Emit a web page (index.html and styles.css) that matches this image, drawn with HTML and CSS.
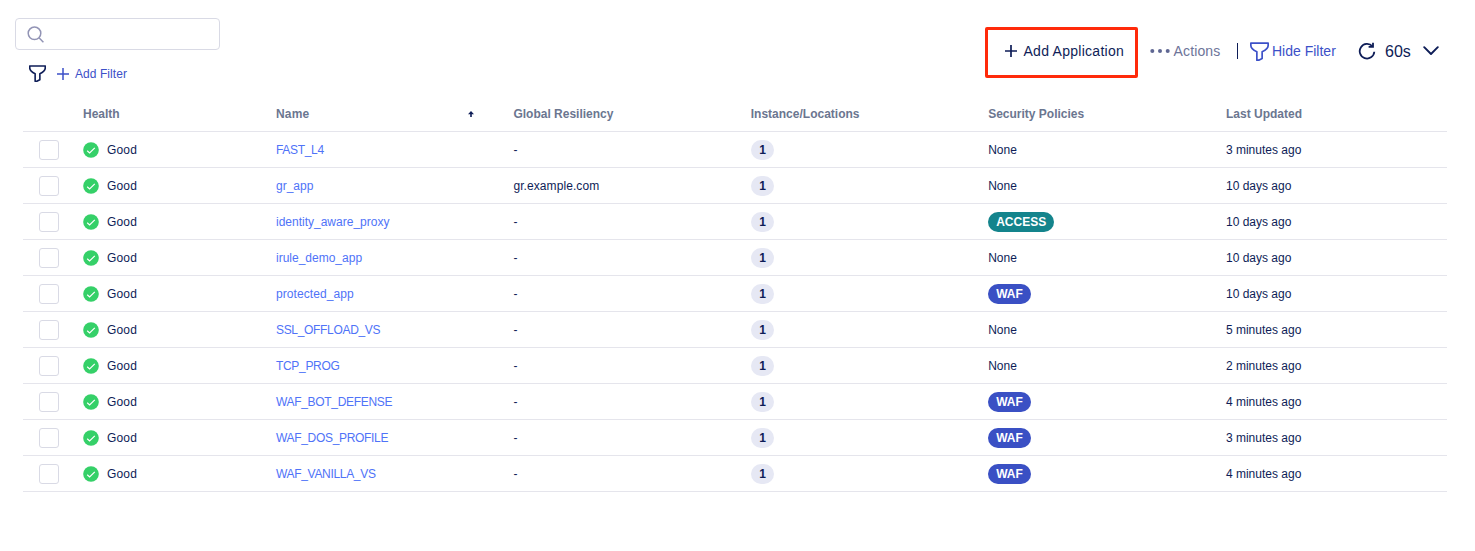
FILE: index.html
```html
<!DOCTYPE html>
<html lang="en">
<head>
<meta charset="utf-8">
<title>Applications</title>
<link rel="stylesheet" href="styles.css">
</head>
<body>
<svg class="defs" width="0" height="0">
  <symbol id="funnel" viewBox="0 0 18 18"><path d="M0.800 1H17.200V3.300C17.200 6.200 15 7.600 11.500 9.200V15.600L8.300 17.200H6.500V9.200C3 7.600 0.800 6.200 0.800 3.300Z" fill="none" stroke="currentColor" stroke-linejoin="round"/></symbol>
  <symbol id="plus" viewBox="0 0 12 12"><path d="M6 0V12M0 6H12" fill="none" stroke="currentColor"/></symbol>
  <symbol id="good" viewBox="0 0 16 16"><circle cx="8" cy="8" r="7.800" fill="#35d068"/><path d="M4.200 8.800L6.600 11L11.800 5.900" fill="none" stroke="#fff" stroke-width="1.200"/></symbol>
</svg>
<header class="toolbar">
  <div class="filters">
    <div class="search"><svg width="18" height="18" viewBox="0 0 18 18" fill="none" stroke="#9294b5" stroke-width="1.500"><circle cx="7.500" cy="7.300" r="6.300"/><path d="M12 11.800L16.400 16.200"/></svg></div>
    <div class="filter-row">
      <svg class="funnel-dark" width="17" height="17"><use href="#funnel"/></svg>
      <svg class="plus-small" width="12" height="12"><use href="#plus"/></svg>
      <span class="add-filter">Add Filter</span>
    </div>
  </div>
  <div class="actions">
    <div class="add-app"><svg width="12" height="12"><use href="#plus"/></svg><span>Add Application</span></div>
    <svg class="dots" width="20" height="6" viewBox="0 0 20 6" fill="#5f6793"><circle cx="2.300" cy="3" r="2"/><circle cx="10" cy="3" r="2"/><circle cx="17.700" cy="3" r="2"/></svg>
    <span class="more">Actions</span>
    <i class="divider"></i>
    <svg class="funnel-blue" width="19" height="19"><use href="#funnel"/></svg>
    <span class="hide">Hide Filter</span>
    <svg class="refresh" width="18" height="18" viewBox="0 0 18 18" fill="none" stroke="#0e1d57" stroke-width="1.800"><path d="M14.500 4.400A7.300 7.300 0 1 0 16.300 9.800"/><path d="M15 0.800V4.800H10.600"/></svg>
    <span class="interval">60s</span>
    <svg class="chevron" width="16" height="10" viewBox="0 0 16 10" fill="none" stroke="#0e1d57" stroke-width="1.900" stroke-linecap="round" stroke-linejoin="round"><path d="M1.200 1.200L8 8L14.800 1.200"/></svg>
  </div>
</header>
<table class="apps">
  <colgroup><col class="c-check"><col class="c-health"><col class="c-std"><col class="c-std"><col class="c-std"><col class="c-std"><col></colgroup>
  <thead><tr><th></th><th>Health</th><th><span class="sorted"><span class="name-label">Name</span><svg width="6" height="6" viewBox="0 0 6 6" fill="#0e1d57"><path d="M3 0L6 3.200H3.800V6H2.200V3.200H0Z"/></svg></span></th><th>Global Resiliency</th><th>Instance/Locations</th><th>Security Policies</th><th>Last Updated</th></tr></thead>
  <tbody>
    <tr><td><i class="check"></i></td><td><span class="health"><svg width="16" height="16"><use href="#good"/></svg>Good</span></td><td><a class="caps">FAST_L4</a></td><td class="gr">-</td><td><b class="count">1</b></td><td>None</td><td>3 minutes ago</td></tr>
    <tr><td><i class="check"></i></td><td><span class="health"><svg width="16" height="16"><use href="#good"/></svg>Good</span></td><td><a>gr_app</a></td><td class="gr">gr.example.com</td><td><b class="count">1</b></td><td>None</td><td>10 days ago</td></tr>
    <tr><td><i class="check"></i></td><td><span class="health"><svg width="16" height="16"><use href="#good"/></svg>Good</span></td><td><a>identity_aware_proxy</a></td><td class="gr">-</td><td><b class="count">1</b></td><td><b class="tag access">ACCESS</b></td><td>10 days ago</td></tr>
    <tr><td><i class="check"></i></td><td><span class="health"><svg width="16" height="16"><use href="#good"/></svg>Good</span></td><td><a>irule_demo_app</a></td><td class="gr">-</td><td><b class="count">1</b></td><td>None</td><td>10 days ago</td></tr>
    <tr><td><i class="check"></i></td><td><span class="health"><svg width="16" height="16"><use href="#good"/></svg>Good</span></td><td><a class="lower">protected_app</a></td><td class="gr">-</td><td><b class="count">1</b></td><td><b class="tag waf">WAF</b></td><td>10 days ago</td></tr>
    <tr><td><i class="check"></i></td><td><span class="health"><svg width="16" height="16"><use href="#good"/></svg>Good</span></td><td><a class="caps">SSL_OFFLOAD_VS</a></td><td class="gr">-</td><td><b class="count">1</b></td><td>None</td><td>5 minutes ago</td></tr>
    <tr><td><i class="check"></i></td><td><span class="health"><svg width="16" height="16"><use href="#good"/></svg>Good</span></td><td><a class="caps">TCP_PROG</a></td><td class="gr">-</td><td><b class="count">1</b></td><td>None</td><td>2 minutes ago</td></tr>
    <tr><td><i class="check"></i></td><td><span class="health"><svg width="16" height="16"><use href="#good"/></svg>Good</span></td><td><a class="caps">WAF_BOT_DEFENSE</a></td><td class="gr">-</td><td><b class="count">1</b></td><td><b class="tag waf">WAF</b></td><td>4 minutes ago</td></tr>
    <tr><td><i class="check"></i></td><td><span class="health"><svg width="16" height="16"><use href="#good"/></svg>Good</span></td><td><a class="caps">WAF_DOS_PROFILE</a></td><td class="gr">-</td><td><b class="count">1</b></td><td><b class="tag waf">WAF</b></td><td>3 minutes ago</td></tr>
    <tr><td><i class="check"></i></td><td><span class="health"><svg width="16" height="16"><use href="#good"/></svg>Good</span></td><td><a class="caps">WAF_VANILLA_VS</a></td><td class="gr">-</td><td><b class="count">1</b></td><td><b class="tag waf">WAF</b></td><td>4 minutes ago</td></tr>
  </tbody>
</table>
</body>
</html>
```
FILE: styles.css
```css
* { box-sizing: border-box; }
body { margin: 0; background: #fff; color: #0e1d57; font: 12px/16px "Liberation Sans", Arial, sans-serif; }
svg { display: block; flex: none; }
.defs { position: absolute; }
.toolbar { display: flex; justify-content: space-between; height: 96px; padding: 18px 36px 0 15px; }
.search { width: 205px; height: 32px; border: 1px solid #d9dae5; border-radius: 4px; padding: 7px 0 0 11px; }
.filter-row { display: flex; align-items: center; height: 18px; margin-top: 14px; padding-left: 13.5px; color: #3c50c8; }
.funnel-dark { color: #0e1d57; stroke-width: 1.7; }
.plus-small { margin: 2px 6px 0 11.5px; stroke-width: 1.5; }
.add-filter { margin-top: 2px; letter-spacing: 0.07px; }
.actions { display: flex; align-items: center; height: 51px; margin-top: 9px; font-size: 14px; white-space: nowrap; }
.actions > *:not(.add-app) { margin-bottom: 3px; }
.add-app { display: flex; align-items: center; width: 153px; height: 51px; padding: 0 0 3px 17px; gap: 7px; border: 3px solid #ff2a0a; border-radius: 2px; stroke-width: 1.7; letter-spacing: 0.27px; }
.dots { margin-left: 12px; }
.more { width: 47px; margin-left: 4px; color: #6d7499; letter-spacing: 0.15px; }
.divider { width: 1.5px; height: 16px; margin-left: 16px; background: #0e1d57; }
.funnel-blue { margin-left: 12px; color: #3c50c8; stroke-width: 1.6; }
.hide { width: 64px; margin-left: 3px; color: #3c50c8; }
.refresh { margin-left: 22px; }
.interval { width: 26px; margin-left: 9px; padding-top: 2px; font-size: 16px; }
.chevron { margin-left: 12px; }
.apps { width: 1424px; margin-left: 23px; table-layout: fixed; border-collapse: separate; border-spacing: 0; }
.c-check { width: 60px; }
.c-health { width: 193px; }
.c-std { width: 237.4px; }
th, td { height: 36px; padding: 0; border-bottom: 1px solid #e5e5ec; text-align: left; vertical-align: middle; }
th { color: #6b7690; font-weight: 700; }
th:last-child, td:last-child { padding-left: 0.4px; }
.sorted { display: flex; align-items: center; justify-content: space-between; padding-right: 39.5px; }
.name-label { letter-spacing: 0.2px; }
.check { display: block; width: 20px; height: 20px; margin: 1px 0 0 16px; border: 1px solid #d9dae5; border-radius: 3px; }
.health { display: flex; align-items: center; gap: 8px; letter-spacing: 0.15px; }
a { color: #4f73f8; }
.caps { letter-spacing: -0.32px; }
.lower, .gr { letter-spacing: 0.08px; }
.count, .tag { display: block; width: max-content; height: 20px; margin-top: 1px; border-radius: 10px; line-height: 20px; }
.count { width: 23px; margin-left: 0.2px; background: #e6e8f4; text-align: center; }
.tag { padding: 0 8px; color: #fff; }
.access { background: #14848c; }
.waf { background: #3a50c4; }
```
